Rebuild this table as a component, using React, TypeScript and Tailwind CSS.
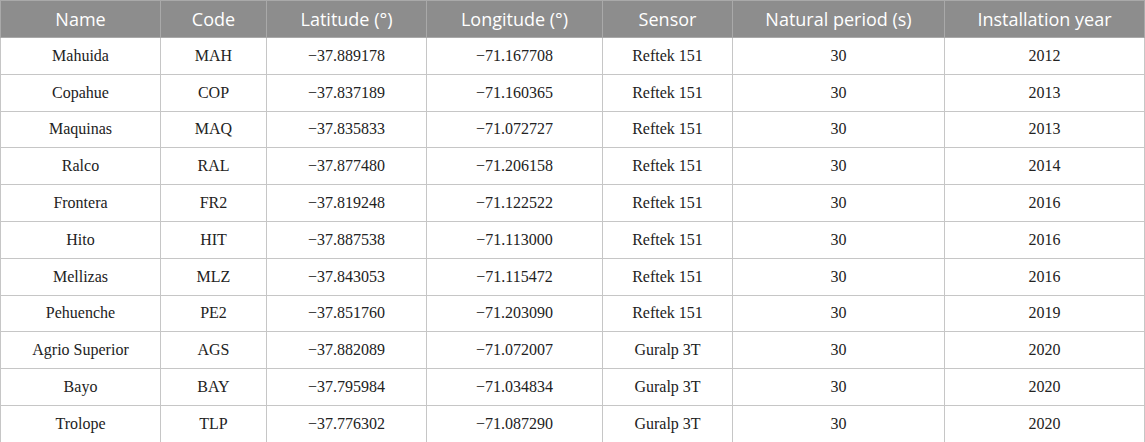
const columns = [
  { label: 'Name', width: 'w-[160px]' },
  { label: 'Code', width: 'w-[106px]' },
  { label: 'Latitude (°)', width: 'w-[160px]' },
  { label: 'Longitude (°)', width: 'w-[176px]' },
  { label: 'Sensor', width: 'w-[130px]' },
  { label: 'Natural period (s)', width: 'w-[212px]' },
  { label: 'Installation year', width: 'w-[200px]' },
];

// Station list
const stations = [
  ['Mahuida', 'MAH', '−37.889178', '−71.167708', 'Reftek 151', '30', '2012'],
  ['Copahue', 'COP', '−37.837189', '−71.160365', 'Reftek 151', '30', '2013'],
  ['Maquinas', 'MAQ', '−37.835833', '−71.072727', 'Reftek 151', '30', '2013'],
  ['Ralco', 'RAL', '−37.877480', '−71.206158', 'Reftek 151', '30', '2014'],
  ['Frontera', 'FR2', '−37.819248', '−71.122522', 'Reftek 151', '30', '2016'],
  ['Hito', 'HIT', '−37.887538', '−71.113000', 'Reftek 151', '30', '2016'],
  ['Mellizas', 'MLZ', '−37.843053', '−71.115472', 'Reftek 151', '30', '2016'],
  ['Pehuenche', 'PE2', '−37.851760', '−71.203090', 'Reftek 151', '30', '2019'],
  ['Agrio Superior', 'AGS', '−37.882089', '−71.072007', 'Guralp 3T', '30', '2020'],
  ['Bayo', 'BAY', '−37.795984', '−71.034834', 'Guralp 3T', '30', '2020'],
  ['Trolope', 'TLP', '−37.776302', '−71.087290', 'Guralp 3T', '30', '2020'],
];

export default function App() {
  return (
    <div className="w-[1145px] h-[442px] bg-white overflow-hidden">
      <table className="w-[1144px] table-fixed border-collapse border border-[#c6c6c6]">
        <colgroup>
          {columns.map((c) => (
            <col key={c.label} className={c.width} />
          ))}
        </colgroup>
        <thead>
          <tr className="h-[37px] bg-[#8d8d8d]">
            {columns.map((c) => (
              <th
                key={c.label}
                className="border border-[#a9a9a9] font-normal text-white text-[18px] leading-none text-center p-0 font-['Open_Sans',sans-serif]"
              >
                {c.label}
              </th>
            ))}
          </tr>
        </thead>
        <tbody>
          {stations.map((row) => (
            <tr key={row[1]} className="h-[36.8px]">
              {row.map((cell, i) => (
                <td
                  key={i}
                  className="border border-[#c6c6c6] text-center text-[16px] leading-none text-[#222] p-0 font-['Liberation_Serif',serif]"
                >
                  {cell}
                </td>
              ))}
            </tr>
          ))}
        </tbody>
      </table>
    </div>
  );
}
